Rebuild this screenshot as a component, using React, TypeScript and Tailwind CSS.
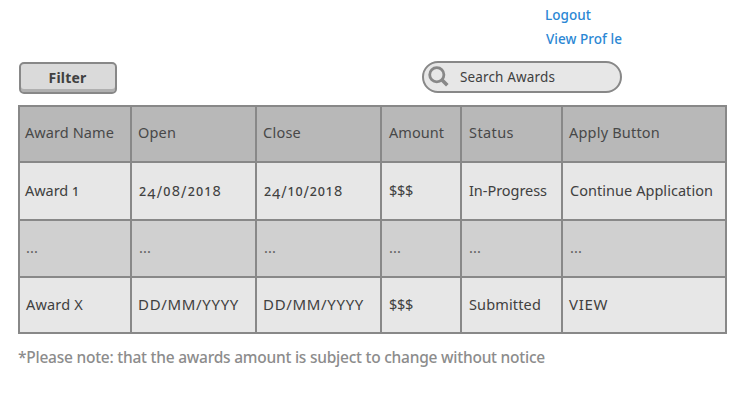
import { useLayoutEffect, useRef, useState } from "react";

/** Text tracked in or out so that it fills the given width. */
function Label({ text, width, className = "" }: { text: string; width: number; className?: string }) {
  const ref = useRef<HTMLSpanElement>(null);
  const [tracking, setTracking] = useState(0);
  useLayoutEffect(() => {
    if (ref.current) {
      const natural = ref.current.getBoundingClientRect().width - tracking * text.length;
      setTracking((width - natural) / text.length);
    }
  }, [text, width]);
  return (
    <span ref={ref} className={"inline-block whitespace-pre " + className} style={{ letterSpacing: tracking }}>
      {/\d/.test(text) ? text.split("").map((c, i) => <Digit key={i} char={c} />) : text}
    </span>
  );
}

/** Old-style numerals: 0, 1 and 2 sit at x-height, 4 hangs below the baseline. */
function Digit({ char }: { char: string }) {
  if ("012".includes(char)) return <span className="text-[12.5px] leading-none font-medium">{char}</span>;
  if (char === "4") return <span className="inline-block translate-y-[2.5px]">{char}</span>;
  if (char === "/") return <span className="inline-block translate-y-px scale-y-115">{char}</span>;
  return <span>{char}</span>;
}

type Cell = { text: string; width: number; pad?: string };

const rows: { bg: string; cells: Cell[] }[] = [
  {
    bg: "bg-[#b8b8b8] pb-[3px] text-[#484848]",
    cells: [
      { text: "Award Name", width: 89, pad: "pl-[5px]" },
      { text: "Open", width: 38 },
      { text: "Close", width: 38 },
      { text: "Amount", width: 55, pad: "pl-[7px]" },
      { text: "Status", width: 45, pad: "pl-[7px]" },
      { text: "Apply Button", width: 91 },
    ],
  },
  {
    bg: "bg-[#e7e7e7] text-[#404040]",
    cells: [
      { text: "Award 1", width: 54, pad: "pl-[5px]" },
      { text: "24/08/2018", width: 83, pad: "pl-[7px]" },
      { text: "24/10/2018", width: 79, pad: "pl-[7px]" },
      { text: "$$$", width: 24, pad: "pl-[7px]" },
      { text: "In-Progress", width: 78, pad: "pl-[7px]" },
      { text: "Continue Application", width: 143, pad: "pl-[7px]" },
    ],
  },
  {
    bg: "bg-[#d0d0d0] pb-px text-[#606060]",
    cells: [
      { text: "...", width: 12 },
      { text: "...", width: 12, pad: "pl-[7px]" },
      { text: "...", width: 12, pad: "pl-[7px]" },
      { text: "...", width: 12, pad: "pl-[7px]" },
      { text: "...", width: 12, pad: "pl-[7px]" },
      { text: "...", width: 12, pad: "pl-[7px]" },
    ],
  },
  {
    bg: "bg-[#e7e7e7] text-[#404040]",
    cells: [
      { text: "Award X", width: 57 },
      { text: "DD/MM/YYYY", width: 101, pad: "pl-[6px] text-[15px] pb-px" },
      { text: "DD/MM/YYYY", width: 101, pad: "pl-[6px] text-[15px] pb-px" },
      { text: "$$$", width: 24, pad: "pl-[7px]" },
      { text: "Submitted", width: 72, pad: "pl-[7px]" },
      { text: "VIEW", width: 39, pad: "pl-[6px] text-[15px] pb-px" },
    ],
  },
];

export default function App() {
  return (
    <div className="h-[416px] w-[746px] bg-white font-['Noto_Sans',sans-serif] text-[14.5px] text-[#404040]">
      <div className="flex h-[105px] justify-between pl-[19px] pr-[124px]">
        <button className="mt-[62px] flex h-8 w-[98px] items-center justify-center rounded-[5px] border-2 border-[#888] bg-[#dadada] pr-px pb-px text-[14px] font-bold shadow-[inset_0_-3px_0_#b0b0b0]">
          <Label text="Filter" width={38} />
        </button>
        <div className="flex w-[200px] flex-col">
          <div className="flex h-[61px] flex-col pl-[123px] pt-[5px] text-[13.5px] font-medium text-[#2b87d4]">
            <a className="h-6 leading-[21px]"><Label text="Logout" width={46} /></a>
            <a className="h-6 pl-px leading-[21px]"><Label text="View Prof le" width={76} /></a>
          </div>
          <div className="flex h-8 items-center rounded-full border-2 border-[#888] bg-[#e7e7e7] pl-1">
            <svg className="h-[22px] w-[22px] shrink-0" viewBox="0 0 22 22" fill="none" stroke="#888" strokeWidth="2.8">
              <circle cx="8.8" cy="8.8" r="7.1" />
              <path d="M13.8 13.8L19.3 19.3" strokeWidth="3.6" />
            </svg>
            <Label className="pl-[10px] text-[13.5px]" text="Search Awards" width={105} />
          </div>
        </div>
      </div>
      <div className="ml-[18px] grid w-[709px] grid-cols-[110px_123px_123px_78px_99px_162px] grid-rows-[54px_56px_55px_54px] gap-0.5 border-2 border-[#888] bg-[#888]">
        {rows.flatMap((row, r) =>
          row.cells.map((cell, c) => (
            <div key={`${r}-${c}`} className={`flex items-center overflow-hidden ${cell.pad ?? "pl-[6px]"} ${row.bg}`}>
              <Label text={cell.text} width={cell.width} />
            </div>
          )),
        )}
      </div>
      <div className="ml-[18px] mt-[11px] text-[15.5px] leading-6 font-medium text-[#8c8c8c]">
        <Label text="*Please note: that the awards amount is subject to change without notice" width={527} />
      </div>
    </div>
  );
}
